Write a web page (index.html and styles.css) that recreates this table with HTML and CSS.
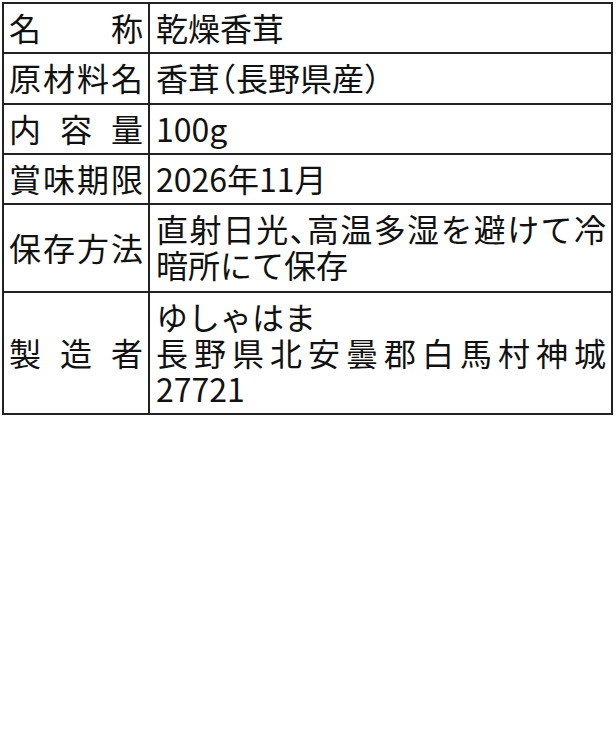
FILE: index.html
```html
<!DOCTYPE html>
<html lang="ja">
<head>
<meta charset="utf-8">
<link rel="stylesheet" href="styles.css">
</head>
<body>
<table class="label">
  <colgroup><col class="col-key"><col class="col-val"></colgroup>
  <tr><th class="key">名称</th><td class="val">乾燥香茸</td></tr>
  <tr><th class="key">原材料名</th><td class="val">香茸<span class="paren">（</span>長野県産<span class="paren">）</span></td></tr>
  <tr><th class="key">内容量</th><td class="val">100g</td></tr>
  <tr><th class="key">賞味期限</th><td class="val">2026年11月</td></tr>
  <tr class="tall"><th class="key">保存方法</th><td class="val">直射日光<span class="paren">、</span>高温多湿を避けて冷暗所にて保存</td></tr>
  <tr><th class="key">製造者</th><td class="val">ゆしゃはま<br>長野県北安曇郡白馬村神城27721</td></tr>
</table>
</body>
</html>
```
FILE: styles.css
```css
html, body {
  margin: 0;
  padding: 0;
  background: #fff;
}
body {
  padding: 2px;
  font-family: "Noto Sans CJK JP", "Noto Sans", sans-serif;
  color: #111;
}
.label {
  border-collapse: collapse;
  width: 611px;
  table-layout: fixed;
}
.col-key { width: 146px; }
.label th, .label td {
  border: 2px solid #222;
  font-size: 32px;
  line-height: 35.75px;
  font-weight: 400;
}
.key {
  padding: 6px 5px 6.5px 5px;
  text-align: justify;
  text-align-last: justify;
  vertical-align: middle;
}
.val {
  padding: 6px 5px 6.5px 6px;
  text-align: justify;
  vertical-align: top;
}
.paren {
  font-feature-settings: "halt" 1;
}
.tall .val {
  padding-bottom: 8.5px;
}
```
